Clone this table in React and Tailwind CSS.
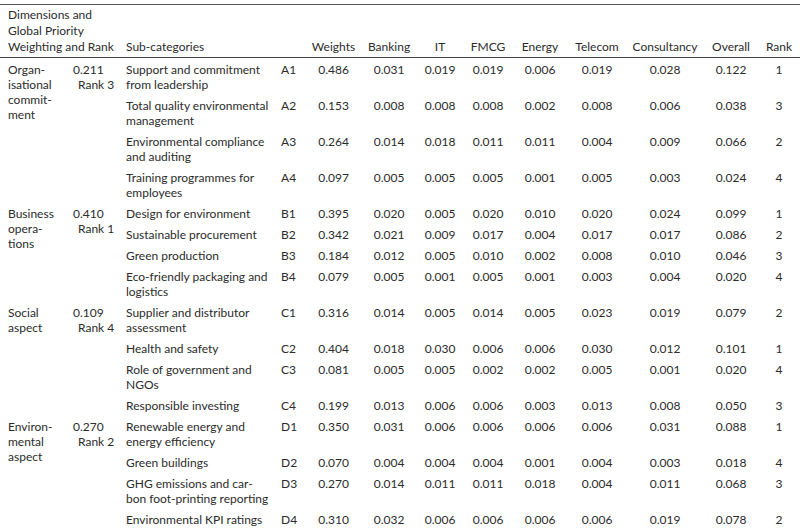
const groups = [
  {
    dim: ['Organ-', 'isational', 'commit-', 'ment'],
    weight: '0.211',
    rank: 'Rank 3',
    rows: [
      { sub: ['Support and commitment', 'from leadership'], code: 'A1', vals: ['0.486', '0.031', '0.019', '0.019', '0.006', '0.019', '0.028', '0.122', '1'] },
      { sub: ['Total quality environmental', 'management'], code: 'A2', vals: ['0.153', '0.008', '0.008', '0.008', '0.002', '0.008', '0.006', '0.038', '3'] },
      { sub: ['Environmental compliance', 'and auditing'], code: 'A3', vals: ['0.264', '0.014', '0.018', '0.011', '0.011', '0.004', '0.009', '0.066', '2'] },
      { sub: ['Training programmes for', 'employees'], code: 'A4', vals: ['0.097', '0.005', '0.005', '0.005', '0.001', '0.005', '0.003', '0.024', '4'] },
    ],
  },
  {
    dim: ['Business', 'opera-', 'tions'],
    weight: '0.410',
    rank: 'Rank 1',
    rows: [
      { sub: ['Design for environment'], code: 'B1', vals: ['0.395', '0.020', '0.005', '0.020', '0.010', '0.020', '0.024', '0.099', '1'] },
      { sub: ['Sustainable procurement'], code: 'B2', vals: ['0.342', '0.021', '0.009', '0.017', '0.004', '0.017', '0.017', '0.086', '2'] },
      { sub: ['Green production'], code: 'B3', vals: ['0.184', '0.012', '0.005', '0.010', '0.002', '0.008', '0.010', '0.046', '3'] },
      { sub: ['Eco-friendly packaging and', 'logistics'], code: 'B4', vals: ['0.079', '0.005', '0.001', '0.005', '0.001', '0.003', '0.004', '0.020', '4'] },
    ],
  },
  {
    dim: ['Social', 'aspect'],
    weight: '0.109',
    rank: 'Rank 4',
    rows: [
      { sub: ['Supplier and distributor', 'assessment'], code: 'C1', vals: ['0.316', '0.014', '0.005', '0.014', '0.005', '0.023', '0.019', '0.079', '2'] },
      { sub: ['Health and safety'], code: 'C2', vals: ['0.404', '0.018', '0.030', '0.006', '0.006', '0.030', '0.012', '0.101', '1'] },
      { sub: ['Role of government and', 'NGOs'], code: 'C3', vals: ['0.081', '0.005', '0.005', '0.002', '0.002', '0.005', '0.001', '0.020', '4'] },
      { sub: ['Responsible investing'], code: 'C4', vals: ['0.199', '0.013', '0.006', '0.006', '0.003', '0.013', '0.008', '0.050', '3'] },
    ],
  },
  {
    dim: ['Environ-', 'mental', 'aspect'],
    weight: '0.270',
    rank: 'Rank 2',
    rows: [
      { sub: ['Renewable energy and', 'energy efficiency'], code: 'D1', vals: ['0.350', '0.031', '0.006', '0.006', '0.006', '0.006', '0.031', '0.088', '1'] },
      { sub: ['Green buildings'], code: 'D2', vals: ['0.070', '0.004', '0.004', '0.004', '0.001', '0.004', '0.003', '0.018', '4'] },
      { sub: ['GHG emissions and car-', 'bon foot-printing reporting'], code: 'D3', vals: ['0.270', '0.014', '0.011', '0.011', '0.018', '0.004', '0.011', '0.068', '3'] },
      { sub: ['Environmental KPI ratings'], code: 'D4', vals: ['0.310', '0.032', '0.006', '0.006', '0.006', '0.006', '0.019', '0.078', '2'] },
    ],
  },
];

const heads = ['Weights', 'Banking', 'IT', 'FMCG', 'Energy', 'Telecom', 'Consultancy', 'Overall', 'Rank'];

const Lines = ({ lines }) =>
  lines.map((l, i) => (
    <span key={i} className="block whitespace-nowrap">
      {l}
    </span>
  ));

export default function App() {
  return (
    <div className="w-[800px] h-[528px] overflow-hidden bg-white pt-[4px] text-[#2b2b2b] text-[12px] font-['Lato','Liberation_Sans',sans-serif]">
      <table className="w-full table-fixed border-collapse border-t-[1.5px] border-[#555]">
        <colgroup>
          <col className="w-[70px]" />
          <col className="w-[50px]" />
          <col className="w-[156px]" />
          <col className="w-[29px]" />
          <col className="w-[57px]" />
          <col className="w-[54px]" />
          <col className="w-[48px]" />
          <col className="w-[48px]" />
          <col className="w-[56px]" />
          <col className="w-[58px]" />
          <col className="w-[78px]" />
          <col className="w-[54px]" />
          <col className="w-[42px]" />
        </colgroup>
        <thead>
          <tr className="border-b border-[#444] leading-[16px]">
            <th colSpan={2} className="pl-[8px] pt-[2px] pb-[2px] text-left font-normal align-bottom">
              <Lines lines={['Dimensions and', 'Global Priority', 'Weighting and Rank']} />
            </th>
            <th className="pl-[6px] pb-[2px] text-left font-normal align-bottom">Sub-categories</th>
            <th />
            {heads.map((h) => (
              <th key={h} className="pb-[2px] text-center font-normal align-bottom whitespace-nowrap">
                {h}
              </th>
            ))}
          </tr>
        </thead>
        <tbody className="leading-[15px]">
          {groups.map((g) =>
            g.rows.map((r, i) => (
              <tr key={r.code}>
                {i === 0 && (
                  <>
                    <td rowSpan={g.rows.length} className="pl-[8px] pt-[4px] align-top">
                      <Lines lines={g.dim} />
                    </td>
                    <td rowSpan={g.rows.length} className="pl-[3px] pt-[4px] align-top">
                      <span className="block">{g.weight}</span>
                      <span className="block pl-[5px]">{g.rank}</span>
                    </td>
                  </>
                )}
                <td className="pl-[6px] pt-[4px] pb-[2px] align-top">
                  <Lines lines={r.sub} />
                </td>
                <td className="pl-[5px] pt-[4px] pb-[2px] align-top">{r.code}</td>
                {r.vals.map((v, j) => (
                  <td key={j} className="pt-[4px] pb-[2px] align-top text-center">
                    {v}
                  </td>
                ))}
              </tr>
            ))
          )}
        </tbody>
      </table>
    </div>
  );
}
